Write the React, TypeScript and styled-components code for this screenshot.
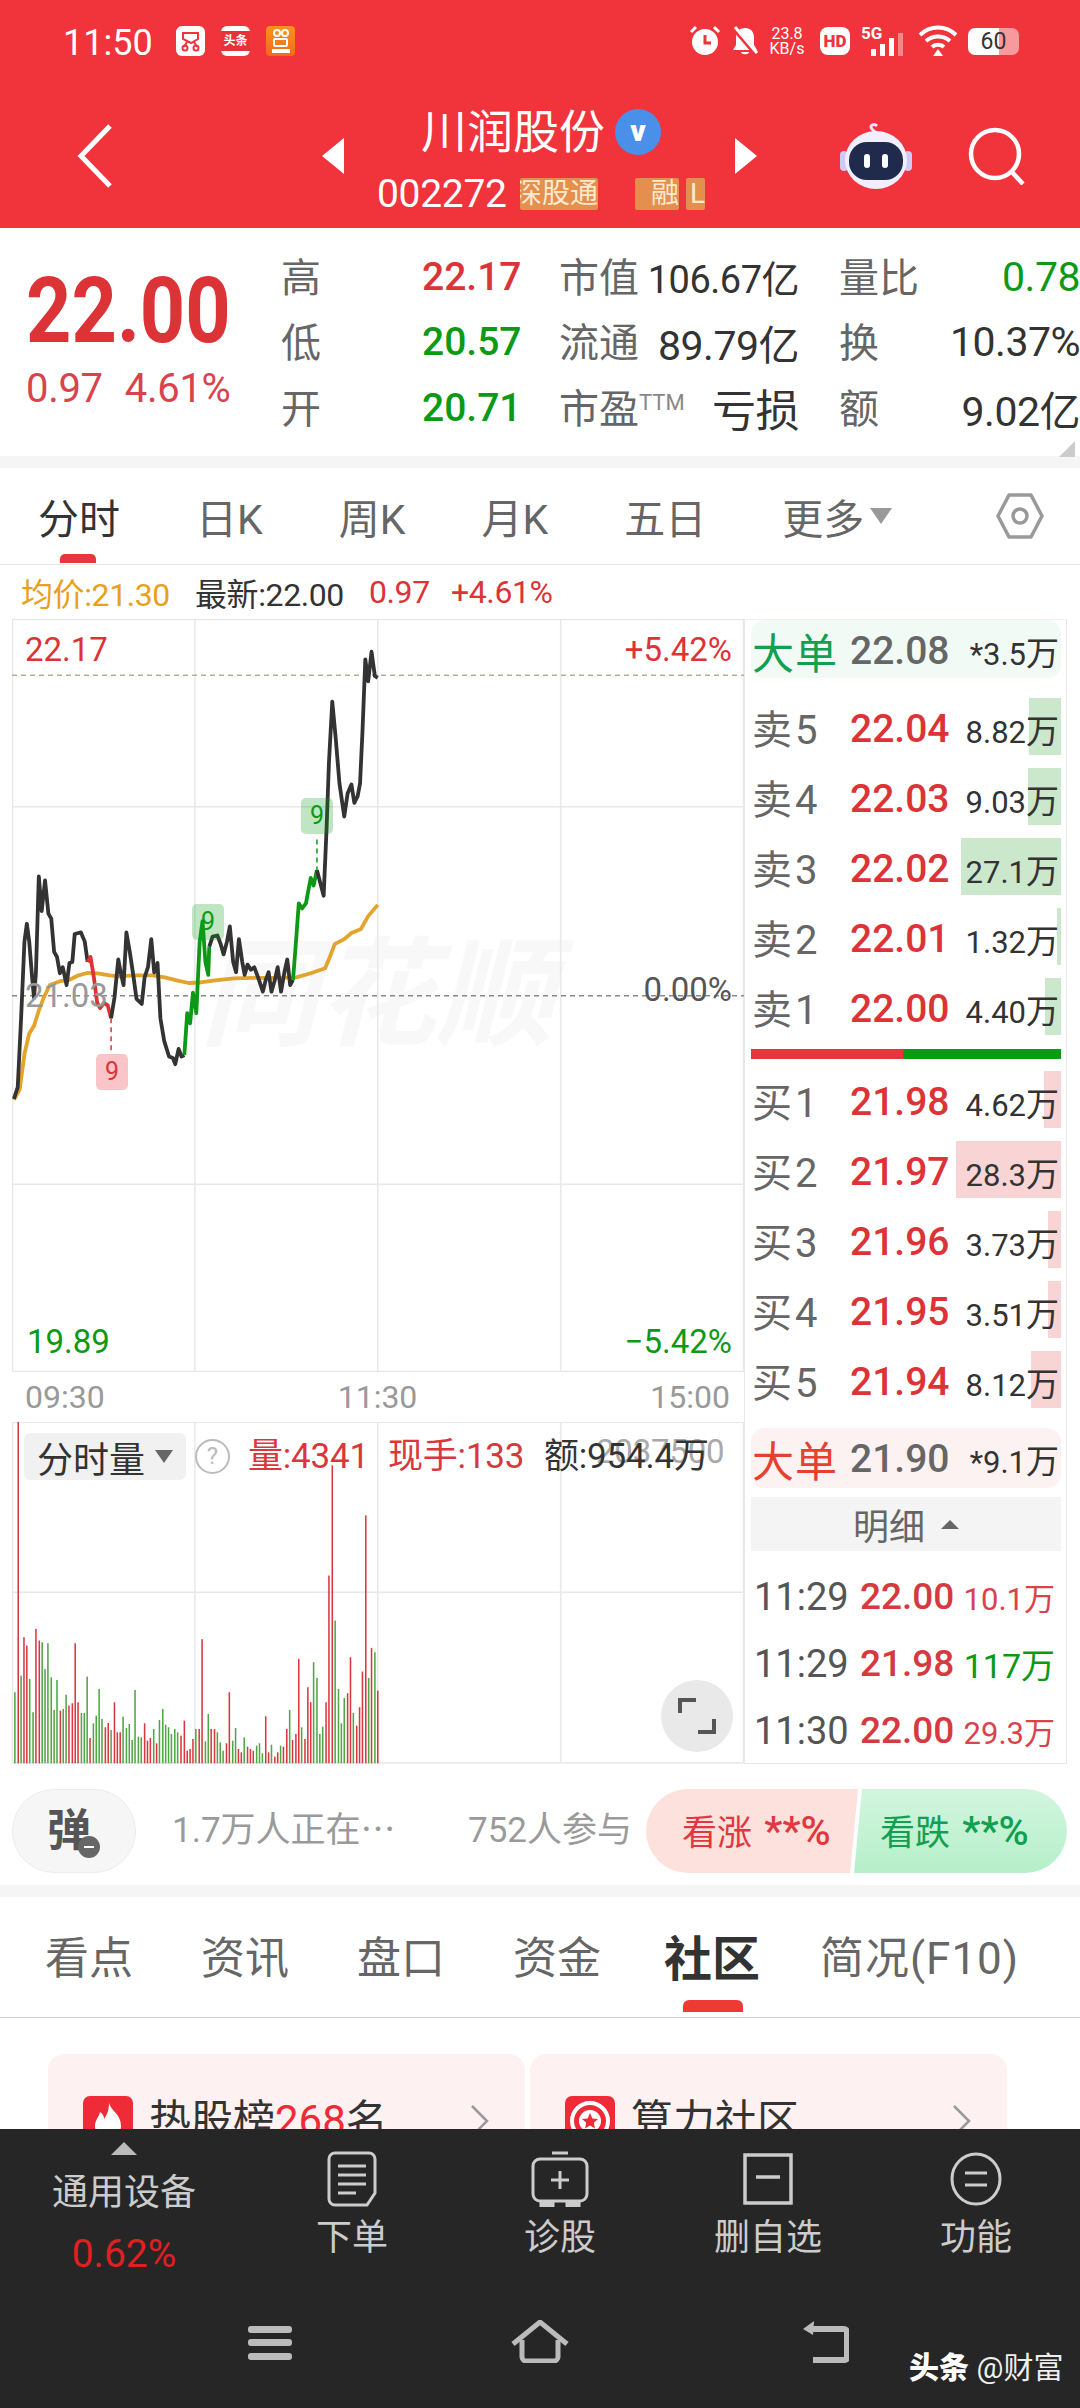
import React from 'react'
import styled, { createGlobalStyle } from 'styled-components'

const RED = '#dc3337'
const GREEN = '#0c9a16'
const HEAD = '#f1333b'

const GlobalStyle = createGlobalStyle`
  html, body {
    margin: 0;
    padding: 0;
    background: #fff;
  }
  * {
    box-sizing: border-box;
  }
  body {
    font-family: Roboto, "Noto Sans CJK SC", sans-serif;
  }
`

const Screen = styled.div`
  width: 1080px;
  height: 2408px;
  display: flex;
  flex-direction: column;
  overflow: hidden;
  background: #fff;
`
const Content = styled.div`
  flex: 1;
  min-height: 0;
  overflow: hidden;
`

/* ---------- header ---------- */
const Header = styled.header`
  height: 228px;
  background: ${HEAD};
  color: #fff;
`
const StatusBar = styled.div`
  height: 84px;
  display: flex;
  align-items: flex-start;
  padding: 26px 0 0 63px;
`
const Clock = styled.span`
  width: 113px;
  font-size: 36px;
  line-height: 34px;
`
const AppIcons = styled.div`
  display: flex;
  gap: 16px;
  width: 513px;
`
const AppTile = styled.div`
  width: 29px;
  height: 30px;
  border-radius: 6px;
  background: #fff;
  display: flex;
  align-items: center;
  justify-content: center;
`
const NewsTile = styled(AppTile)`
  background: linear-gradient(#fff 0 16%, #e8323a 16% 84%, #fff 84%);
  color: #fff;
  font-size: 12px;
  font-weight: 700;
  line-height: 12px;
`
const OrangeTile = styled(AppTile)`
  background: linear-gradient(#f7941d, #f26a1b);
  border-radius: 4px;
`
const StatusRight = styled.div`
  display: flex;
  align-items: center;
  height: 30px;
`
const Speed = styled.div`
  width: 38px;
  margin: 0 14px 0 8px;
  font-size: 16px;
  line-height: 15px;
  text-align: center;
`
const HdBadge = styled.div`
  width: 30px;
  height: 28px;
  border-radius: 8px;
  background: #fff;
  color: ${HEAD};
  font-size: 17px;
  font-weight: 900;
  line-height: 28px;
  text-align: center;
  margin-right: 11px;
`
const Battery = styled.div`
  width: 51px;
  height: 27px;
  margin-left: 10px;
  border-radius: 7px;
  background: linear-gradient(90deg, #fff 0 60%, rgba(255, 255, 255, 0.5) 60%);
  color: #333;
  font-size: 23px;
  line-height: 27px;
  text-align: center;
`
const NavBar = styled.div`
  height: 144px;
  display: flex;
  align-items: center;
  padding-left: 77px;
`
const TitleBlock = styled.div`
  width: 328px;
  margin: 0 30px 0 33px;
`
const TitleLine = styled.div`
  height: 60px;
  display: flex;
  align-items: center;
  justify-content: center;
  gap: 10px;
  margin-bottom: 16px;
`
const StockName = styled.span`
  font-size: 46px;
  line-height: 60px;
  white-space: nowrap;
`
const VBadge = styled.span`
  width: 46px;
  height: 46px;
  border-radius: 50%;
  background: #4a90e8;
  font-size: 30px;
  font-weight: 900;
  line-height: 44px;
  text-align: center;
`
const CodeLine = styled.div`
  height: 32px;
  display: flex;
  align-items: center;
  overflow: hidden;
`
const StockCode = styled.span`
  width: 143px;
  font-size: 39px;
  letter-spacing: -0.3px;
  white-space: nowrap;
`
const Tag = styled.span<{ $w: number; $gap: number }>`
  flex: none;
  width: ${(p) => p.$w}px;
  height: 32px;
  margin-right: ${(p) => p.$gap}px;
  background: #e48f4d;
  border-radius: 2px;
  color: #fce9d0;
  font-size: 28px;
  line-height: 32px;
  overflow: hidden;
  white-space: nowrap;
  display: flex;
  justify-content: flex-end;
`
const RobotBox = styled.div`
  margin: 0 56px 0 83px;
  display: flex;
`

/* ---------- quote ---------- */
const Quote = styled.section`
  height: 228px;
  display: flex;
  padding-top: 16px;
`
const PriceBox = styled.div`
  width: 281px;
  padding: 20px 0 0 26px;
`
const BigPrice = styled.div`
  font-size: 90px;
  line-height: 96px;
  font-weight: 700;
  color: ${RED};
  transform: scaleX(0.88);
  transform-origin: left center;
`
const Change = styled.div`
  display: flex;
  gap: 22px;
  margin-top: 7px;
  font-size: 40px;
  line-height: 44px;
  letter-spacing: -0.3px;
  color: #d9434a;
`
const StatGrid = styled.div`
  display: grid;
  grid-template-columns: 141px 137px 90px 150px 126px 155px;
  grid-auto-rows: 65.5px;
  align-items: center;
  width: 799px;
  position: relative;
`
const StatLabel = styled.span<{ $pad?: boolean }>`
  padding-left: ${(p) => (p.$pad ? 40 : 0)}px;
  margin-bottom: 4px;
  font-size: 40px;
  color: #666;
  white-space: nowrap;
`
const Ttm = styled.sup`
  font-size: 22px;
  color: #888;
  line-height: 0;
  vertical-align: 13px;
`
const StatRise = styled.span<{ $c: string }>`
  font-size: 39px;
  font-weight: 500;
  color: ${(p) => p.$c};
`
const StatValue = styled.span<{ $c?: string; $size?: number }>`
  justify-self: end;
  font-size: ${(p) => p.$size || 41}px;
  letter-spacing: -0.5px;
  color: ${(p) => p.$c || '#333'};
  white-space: nowrap;
`
const Corner = styled.i`
  position: absolute;
  right: 5px;
  bottom: -1px;
  width: 0;
  height: 0;
  border-left: 16px solid transparent;
  border-bottom: 16px solid #ccc;
`
const Band = styled.div`
  height: 12px;
  background: #f5f5f5;
`

/* ---------- chart tabs ---------- */
const ChartTabs = styled.nav`
  height: 97px;
  display: flex;
  align-items: center;
  padding: 0 36px 0 38px;
  gap: 76px;
  border-bottom: 1px solid #e6e6e6;
  position: relative;
`
const ChartTab = styled.span<{ $on?: boolean }>`
  position: relative;
  font-size: 41px;
  color: ${(p) => (p.$on ? '#333' : '#666')};
  display: flex;
  align-items: center;
  gap: 6px;
  white-space: nowrap;
`
const TabMark = styled.i`
  position: absolute;
  left: 22px;
  top: 68px;
  width: 36px;
  height: 9px;
  border-radius: 5px 5px 0 0;
  background: #e8363a;
`
const DownTri = styled.i<{ $s: number; $c: string }>`
  width: 0;
  height: 0;
  border-left: ${(p) => p.$s}px solid transparent;
  border-right: ${(p) => p.$s}px solid transparent;
  border-top: ${(p) => p.$s * 1.5}px solid ${(p) => p.$c};
`
const GearBox = styled.span`
  margin-left: auto;
  display: flex;
`
const Legend = styled.div`
  height: 54px;
  display: flex;
  align-items: center;
  padding-left: 21px;
  font-size: 32px;
  letter-spacing: -0.4px;
  white-space: nowrap;
`
const LegendItem = styled.span<{ $c: string; $w: number }>`
  width: ${(p) => p.$w}px;
  color: ${(p) => p.$c};
`

/* ---------- chart ---------- */
const ChartRow = styled.section`
  height: 1145px;
  display: flex;
  padding-left: 12px;
`
const ChartCol = styled.div`
  width: 732px;
`
const Plot = styled.div<{ $h: number }>`
  position: relative;
  height: ${(p) => p.$h}px;
  overflow: hidden;
  svg {
    display: block;
    position: relative;
  }
`
const Watermark = styled.span`
  position: absolute;
  left: 188px;
  top: 322px;
  font-size: 118px;
  font-weight: 700;
  font-style: italic;
  line-height: 110px;
  color: #f8f8f8;
  white-space: nowrap;
`
const ChartLabel = styled.span<{ $c: string; $top: number; $left?: number; $right?: number }>`
  position: absolute;
  top: ${(p) => p.$top}px;
  ${(p) => (p.$left !== undefined ? `left: ${p.$left}px;` : `right: ${p.$right}px;`)}
  font-size: 33px;
  line-height: 36px;
  color: ${(p) => p.$c};
  white-space: nowrap;
`
const Pin = styled.span<{ $red?: boolean; $x: number; $y: number }>`
  position: absolute;
  left: ${(p) => p.$x}px;
  top: ${(p) => p.$y}px;
  width: 32px;
  height: 36px;
  border-radius: 5px;
  background: ${(p) => (p.$red ? 'rgba(240, 90, 100, 0.35)' : 'rgba(12, 154, 22, 0.26)')};
  color: ${(p) => (p.$red ? RED : GREEN)};
  font-size: 25px;
  line-height: 36px;
  text-align: center;
`
const TimeAxis = styled.div`
  height: 50px;
  display: flex;
  align-items: center;
  justify-content: space-between;
  padding: 0 14px 0 13px;
  font-size: 32px;
  color: #999;
`
const VolChip = styled.div`
  position: absolute;
  left: 12px;
  top: 11px;
  width: 162px;
  height: 47px;
  border-radius: 6px;
  background: #f1f1f1;
  color: #333;
  font-size: 36px;
  display: flex;
  align-items: center;
  justify-content: center;
  gap: 10px;
`
const HelpDot = styled.span`
  position: absolute;
  left: 183px;
  top: 17px;
  width: 35px;
  height: 35px;
  border: 2px solid #bbb;
  border-radius: 50%;
  color: #bbb;
  font-size: 24px;
  line-height: 31px;
  text-align: center;
`
const VolText = styled.span<{ $c: string; $x: number; $size?: number; $y?: number }>`
  position: absolute;
  left: ${(p) => p.$x}px;
  top: ${(p) => p.$y ?? 13}px;
  font-size: ${(p) => p.$size || 35}px;
  line-height: 44px;
  letter-spacing: -0.2px;
  color: ${(p) => p.$c};
  white-space: nowrap;
`
const ExpandBtn = styled.div`
  position: absolute;
  left: 649px;
  top: 258px;
  width: 72px;
  height: 72px;
  border-radius: 50%;
  background: #e9e9e9;
  display: flex;
  align-items: center;
  justify-content: center;
`

/* ---------- order book ---------- */
const Book = styled.aside`
  width: 323px;
  padding: 0 5px 0 6px;
  border: 1px solid #e8e8e8;
  border-top: 1px solid #f0f0f0;
  height: 1145px;
`
const BigOrder = styled.div<{ $sell?: boolean; $h: number }>`
  height: ${(p) => p.$h}px;
  border-radius: 14px;
  background: ${(p) => (p.$sell ? '#f2faf5' : '#fdf2f2')};
  display: grid;
  grid-template-columns: 98px 1fr auto;
  align-items: center;
  padding: 0 2px 5px 1px;
`
const BigLabel = styled.span<{ $sell?: boolean }>`
  font-size: 42px;
  letter-spacing: 1px;
  color: ${(p) => (p.$sell ? '#10a050' : '#e8402f')};
  white-space: nowrap;
`
const GrayPrice = styled.span`
  font-size: 39px;
  font-weight: 500;
  color: #666;
`
const Levels = styled.div<{ $top: number }>`
  display: flex;
  flex-direction: column;
  gap: 13px;
  margin-top: ${(p) => p.$top}px;
`
const Level = styled.div`
  position: relative;
  height: 57px;
  display: grid;
  grid-template-columns: 98px 1fr auto;
  align-items: center;
  padding: 0 2px 4px 1px;
`
const DepthBar = styled.i<{ $sell?: boolean }>`
  position: absolute;
  right: 0;
  top: 0;
  bottom: 0;
  background: ${(p) => (p.$sell ? '#cbe8cc' : '#f8d4d5')};
`
const LevelName = styled.span`
  position: relative;
  font-size: 40px;
  letter-spacing: 3px;
  margin-bottom: 3px;
  color: #666;
  white-space: nowrap;
`
const LevelPrice = styled.span`
  position: relative;
  font-size: 39px;
  font-weight: 500;
  color: ${RED};
`
const LevelVol = styled.span`
  position: relative;
  font-size: 31px;
  color: #333;
  white-space: nowrap;
`
const Wan = styled.span`
  font-size: 33px;
`
const Balance = styled.div`
  display: flex;
  height: 10px;
  margin-top: 14px;
  background: ${GREEN};
`
const BalanceRed = styled.i`
  display: block;
  height: 100%;
  background: #e8343a;
`
const DetailBar = styled.div`
  height: 54px;
  margin-top: 9px;
  background: #f4f4f4;
  display: flex;
  align-items: center;
  justify-content: center;
  gap: 16px;
  color: #666;
  font-size: 36px;
`
const UpTri = styled.i<{ $s: number; $c: string }>`
  width: 0;
  height: 0;
  border-left: ${(p) => p.$s}px solid transparent;
  border-right: ${(p) => p.$s}px solid transparent;
  border-bottom: ${(p) => p.$s}px solid ${(p) => p.$c};
`
const Trades = styled.div`
  margin-top: 12px;
`
const Trade = styled.div`
  height: 67px;
  display: grid;
  grid-template-columns: 106px 1fr auto;
  align-items: center;
  padding: 0 6px 0 3px;
`
const TradeTime = styled.span`
  font-size: 38px;
  color: #555;
`
const TradePrice = styled.span`
  font-size: 37px;
  font-weight: 500;
  color: #d63a3f;
`
const TradeVol = styled.span<{ $c: string; $size?: number }>`
  font-size: ${(p) => p.$size || 31}px;
  color: ${(p) => p.$c};
  white-space: nowrap;
`

/* ---------- poll ---------- */
const PollRow = styled.section`
  height: 121px;
  padding: 25px 0 0 12px;
  display: flex;
  align-items: flex-start;
`
const DanmuPill = styled.div`
  position: relative;
  width: 124px;
  height: 84px;
  border-radius: 42px;
  border: 1px solid #ececec;
  background: #f6f6f6;
  color: #555;
  font-size: 44px;
  font-weight: 700;
  line-height: 82px;
  text-align: center;
  padding-right: 10px;
  margin-right: 36px;
`
const PillMinus = styled.i`
  position: absolute;
  left: 65px;
  top: 46px;
  width: 22px;
  height: 22px;
  border-radius: 50%;
  background: #666;
  &::after {
    content: '';
    position: absolute;
    left: 6px;
    right: 6px;
    top: 10px;
    height: 2px;
    background: #fff;
  }
`
const PollText = styled.span<{ $w: number }>`
  width: ${(p) => p.$w}px;
  font-size: 35px;
  line-height: 84px;
  color: #9a9a9a;
  white-space: nowrap;
`
const PollUp = styled.div`
  width: 212px;
  height: 84px;
  padding-left: 36px;
  border-radius: 42px 0 0 42px;
  background: #fde1dd;
  color: #e0383e;
  font-size: 35px;
  line-height: 84px;
  clip-path: polygon(0 0, 100% 0, calc(100% - 8px) 100%, 0 100%);
  white-space: nowrap;
`
const PollDown = styled.div`
  width: 213px;
  height: 84px;
  margin-left: -4px;
  padding-left: 26px;
  border-radius: 0 42px 42px 0;
  background: linear-gradient(#d2f6df, #b6efc9);
  color: #10a050;
  font-size: 35px;
  line-height: 84px;
  clip-path: polygon(8px 0, 100% 0, 100% 100%, 0 100%);
  white-space: nowrap;
`
const PollPct = styled.span`
  margin-left: 2px;
  font-size: 41px;
  font-weight: 500;
`

/* ---------- info tabs ---------- */
const InfoTabs = styled.nav`
  height: 121px;
  display: flex;
  align-items: center;
  padding: 0 0 4px 45px;
  gap: 68px;
  border-bottom: 1px solid #ccc;
`
const InfoTab = styled.span<{ $on?: boolean }>`
  position: relative;
  font-size: ${(p) => (p.$on ? 48 : 44)}px;
  font-weight: ${(p) => (p.$on ? 700 : 400)};
  color: ${(p) => (p.$on ? '#333' : '#666')};
  margin: ${(p) => (p.$on ? '0 -8px 0 -5px' : 0)};
  white-space: nowrap;
`
const WideTab = styled(InfoTab)`
  letter-spacing: 1px;
`
const InfoMark = styled.i`
  position: absolute;
  left: 19px;
  top: 80px;
  width: 60px;
  height: 12px;
  border-radius: 6px 6px 0 0;
  background: #ef3a33;
`
const Cards = styled.div`
  display: flex;
  gap: 5px;
  padding: 36px 0 0 48px;
`
const Card = styled.div`
  width: 477px;
  height: 200px;
  padding: 42px 0 0 35px;
  border-radius: 16px 16px 0 0;
  background: #fdf1f1;
  display: flex;
  align-items: flex-start;
`
const CardIcon = styled.div`
  width: 50px;
  height: 50px;
  border-radius: 7px;
  background: #ee2b36;
  display: flex;
  align-items: center;
  justify-content: center;
  margin-right: 16px;
`
const CardText = styled.span`
  flex: 1;
  font-size: 42px;
  line-height: 50px;
  color: #333;
  white-space: nowrap;
`
const CardHot = styled.span`
  color: #ee2b36;
`
const CardArrow = styled.span`
  margin: 8px 35px 0 0;
  display: flex;
`

/* ---------- bottom bar ---------- */
const BottomBar = styled.footer`
  position: relative;
  height: 279px;
  flex: none;
  background: #262626;
`
const Actions = styled.div`
  height: 191px;
  display: grid;
  grid-template-columns: 248px repeat(4, 208px);
`
const Holding = styled.div`
  display: flex;
  flex-direction: column;
  align-items: center;
  padding-top: 13px;
`
const HoldingName = styled.span`
  margin-top: 13px;
  font-size: 36px;
  line-height: 50px;
  color: #ccc;
`
const HoldingPct = styled.span`
  margin-top: 11px;
  font-size: 39px;
  line-height: 50px;
  color: #e02020;
`
const Action = styled.div`
  display: flex;
  flex-direction: column;
  align-items: center;
  padding-top: 22px;
`
const ActionLabel = styled.span`
  margin-top: 6px;
  font-size: 36px;
  line-height: 50px;
  color: #ccc;
`
const SystemKeys = styled.div`
  display: grid;
  grid-template-columns: 263px 290px 48px;
  padding-left: 248px;
`
const Credit = styled.span`
  position: absolute;
  left: 909px;
  top: 220px;
  font-size: 30px;
  line-height: 38px;
  color: #eee;
  white-space: nowrap;
`
const CreditBold = styled.b`
  color: #fff;
  font-weight: 900;
`

/* ---------- data ---------- */
const black1 =
  '30,958 38,935 45,800 52,650 57,615 62,650 68,720 72,760 76,710 82,522 88,590 95,530 102,595 108,605 114,670 120,680 126,712 132,700 140,735 146,692 152,690 157,635 170,632 178,650 184,690'
const red1 = '184,690 190,680 197,720 204,770 210,780 218,770 226,775 233,800'
const black2 =
  '233,800 240,760 248,685 253,710 259,735 265,632 272,670 280,720 286,762 297,772 303,720 310,700 317,645 323,710 330,692 336,800 344,845 354,875 362,878 367,890 374,860 380,875 386,872'
const green1 = '386,872 392,790 398,810 404,750 411,790 418,650 424,610 430,690 436,715 438,660'
const black3 =
  '438,660 445,640 455,638 462,655 468,675 475,650 481,620 488,690 494,710 500,645 507,690 512,715 518,695 525,705 532,700 540,720 550,748 556,725 562,710 568,748 575,725 581,700 588,748 595,710 601,685 607,735 613,725'
const green2 = '613,725 620,640 625,575 632,585 640,575 650,525 656,540 663,510'
const black4 =
  '663,510 670,535 677,560 683,430 688,300 695,180 702,250 710,340 720,405 727,360 735,342 741,378 748,365 753,340 758,240 764,97 770,140 777,82 784,130 790,133'
const avgLine =
  '30,960 42,940 52,870 62,830 72,815 82,785 92,760 105,735 125,728 145,725 165,716 185,711 205,712 230,716 250,718 280,716 320,716 345,720 370,726 395,731 420,730 450,726 490,722 530,721 580,721 620,720 650,712 680,702 690,680 700,655 720,645 735,633 755,625 770,600 790,578'

// [x, top, colour] in the crop units of the volume plot
const volumes: [number, number, 'r' | 'g'][] = [
  [32, 875, 'g'], [39, 62, 'r'], [45, 825, 'g'], [51, 710, 'r'], [57, 735, 'r'], [63, 835, 'g'], [70, 935, 'g'], [76, 685, 'r'],
  [83, 720, 'r'], [89, 725, 'g'], [95, 805, 'g'], [101, 728, 'g'], [108, 830, 'g'], [114, 928, 'g'], [120, 838, 'g'], [127, 930, 'r'],
  [133, 925, 'g'], [139, 882, 'g'], [145, 915, 'r'], [152, 908, 'r'], [158, 728, 'r'], [164, 905, 'r'], [171, 937, 'g'], [177, 937, 'g'],
  [183, 828, 'g'], [189, 1012, 'r'], [196, 968, 'g'], [202, 945, 'g'], [208, 865, 'g'], [214, 955, 'g'], [221, 980, 'r'], [227, 967, 'r'],
  [233, 988, 'g'], [240, 905, 'r'], [246, 995, 'r'], [252, 995, 'r'], [258, 948, 'g'], [265, 982, 'g'], [271, 970, 'g'], [277, 1018, 'g'],
  [283, 868, 'g'], [290, 1008, 'g'], [296, 1010, 'g'], [303, 968, 'r'], [309, 1020, 'r'], [315, 1012, 'r'], [322, 985, 'g'], [328, 1028, 'r'],
  [334, 958, 'g'], [341, 925, 'g'], [347, 972, 'g'], [353, 980, 'g'], [359, 1000, 'g'], [366, 985, 'g'], [372, 995, 'g'], [379, 1005, 'r'],
  [386, 960, 'r'], [392, 1050, 'r'], [398, 1045, 'r'], [404, 1015, 'r'], [410, 985, 'g'], [417, 985, 'r'], [423, 716, 'r'], [430, 1022, 'g'],
  [436, 940, 'g'], [442, 985, 'r'], [449, 985, 'r'], [455, 995, 'g'], [461, 1025, 'g'], [467, 1050, 'g'], [474, 1028, 'r'], [480, 875, 'r'],
  [487, 1020, 'g'], [493, 982, 'g'], [499, 1045, 'r'], [505, 1055, 'r'], [511, 1010, 'g'], [518, 1038, 'r'], [524, 1045, 'r'], [530, 1050, 'r'],
  [537, 1035, 'g'], [543, 1028, 'g'], [549, 1058, 'g'], [556, 947, 'r'], [562, 1055, 'r'], [568, 1032, 'g'], [575, 1068, 'r'], [581, 1055, 'r'],
  [587, 1035, 'g'], [593, 1038, 'r'], [600, 985, 'r'], [606, 928, 'g'], [612, 1018, 'r'], [619, 1000, 'r'], [625, 775, 'r'], [631, 980, 'g'],
  [638, 1015, 'r'], [644, 860, 'r'], [650, 905, 'r'], [656, 785, 'g'], [663, 832, 'g'], [669, 1000, 'g'], [675, 978, 'g'], [682, 905, 'r'],
  [688, 525, 'r'], [695, 195, 'r'], [701, 660, 'g'], [708, 865, 'g'], [714, 968, 'g'], [720, 892, 'g'], [727, 878, 'r'], [733, 770, 'r'],
  [739, 937, 'g'], [746, 975, 'r'], [752, 920, 'r'], [758, 813, 'r'], [765, 345, 'r'], [771, 832, 'g'], [777, 742, 'r'], [784, 755, 'g'], [790, 870, 'r'],
]

const sells = [
  { name: '卖5', price: '22.04', vol: '8.82', bar: 32 },
  { name: '卖4', price: '22.03', vol: '9.03', bar: 33 },
  { name: '卖3', price: '22.02', vol: '27.1', bar: 100 },
  { name: '卖2', price: '22.01', vol: '1.32', bar: 4 },
  { name: '卖1', price: '22.00', vol: '4.40', bar: 16 },
]
const buys = [
  { name: '买1', price: '21.98', vol: '4.62', bar: 17 },
  { name: '买2', price: '21.97', vol: '28.3', bar: 105 },
  { name: '买3', price: '21.96', vol: '3.73', bar: 13 },
  { name: '买4', price: '21.95', vol: '3.51', bar: 13 },
  { name: '买5', price: '21.94', vol: '8.12', bar: 30 },
]

const Line: React.FC<{ points: string; color: string; width?: number }> = ({ points, color, width = 3.8 }) => (
  <polyline points={points} fill="none" stroke={color} strokeWidth={width} strokeLinejoin="round" vectorEffect="non-scaling-stroke" />
)

const GridLine: React.FC<{ d: string; color?: string; dash?: boolean }> = ({ d, color = '#e8e8e8', dash }) => (
  <path d={d} fill="none" stroke={color} strokeWidth={1.5} strokeDasharray={dash ? '5 4' : undefined} vectorEffect="non-scaling-stroke" />
)

const Robot = () => (
  <svg width="72" height="66" viewBox="0 0 72 66">
    <path d="M36 10c-2-3-5-3-5-6s4-3 6-1" fill="none" stroke="#e8e4ff" strokeWidth="3" />
    <rect x="0" y="28" width="8" height="20" rx="4" fill="#cfc9f5" />
    <rect x="64" y="28" width="8" height="20" rx="4" fill="#cfc9f5" />
    <ellipse cx="36" cy="37" rx="31" ry="29" fill="#f1eeff" />
    <rect x="9" y="19" width="54" height="38" rx="18" fill="#1f2a4d" />
    <rect x="24" y="31" width="6" height="14" rx="3" fill="#fff" />
    <rect x="42" y="31" width="6" height="14" rx="3" fill="#fff" />
  </svg>
)

const App: React.FC = () => {
  return (
    <Screen>
      <GlobalStyle />
      <Content>
        <Header>
          <StatusBar>
            <Clock>11:50</Clock>
            <AppIcons>
              <AppTile>
                <svg width="21" height="22" viewBox="0 0 21 22" fill="none" stroke={HEAD} strokeWidth="2">
                  <path d="M3 3h15v6l-7 4-8-4zM7 12l-3 5M14 12l3 5" />
                  <circle cx="5" cy="18" r="2.5" />
                  <circle cx="16" cy="18" r="2.5" />
                </svg>
              </AppTile>
              <NewsTile>头条</NewsTile>
              <OrangeTile>
                <svg width="20" height="26" viewBox="0 0 20 26" fill="none" stroke="#fff" strokeWidth="2">
                  <circle cx="6" cy="5" r="3" />
                  <circle cx="14" cy="5" r="3" />
                  <rect x="3" y="11" width="13" height="7" rx="1" />
                  <path d="M1 23h18" strokeWidth="4" />
                </svg>
              </OrangeTile>
            </AppIcons>
            <StatusRight>
              <svg width="32" height="32" viewBox="0 0 32 32">
                <circle cx="16" cy="17" r="13" fill="#fff" />
                <path d="M16 10v8h6" fill="none" stroke={HEAD} strokeWidth="3" />
                <path d="M2 7l5-5M30 7l-5-5" stroke="#fff" strokeWidth="3" />
              </svg>
              <svg width="30" height="32" viewBox="0 0 30 32" style={{ marginLeft: 9 }}>
                <path d="M15 3c6 0 9 4 9 10v7l3 5H3l3-5v-7c0-6 3-10 9-10zM11 27h8c0 3-8 3-8 0z" fill="#fff" />
                <path d="M3 2l24 28" stroke={HEAD} strokeWidth="5" />
                <path d="M5 2l22 26" stroke="#fff" strokeWidth="3" />
              </svg>
              <Speed>
                23.8
                <br />
                KB/s
              </Speed>
              <HdBadge>HD</HdBadge>
              <svg width="46" height="32" viewBox="0 0 46 32" fill="#fff">
                <text x="0" y="14" fontSize="17" fontWeight="700" fontFamily="Roboto">5G</text>
                <rect x="10" y="24" width="5" height="7" />
                <rect x="19" y="19" width="5" height="12" />
                <rect x="28" y="13" width="5" height="18" />
                <rect x="37" y="8" width="5" height="23" opacity="0.4" />
              </svg>
              <svg width="40" height="32" viewBox="0 0 40 32" fill="none" stroke="#fff" strokeWidth="4" style={{ marginLeft: 11 }}>
                <path d="M2 10c10-10 26-10 36 0M8 16c7-6 17-6 24 0M14 22c3-3 9-3 12 0" />
                <path d="M20 24l5 7H15z" fill="#fff" stroke="none" />
              </svg>
              <Battery>60</Battery>
            </StatusRight>
          </StatusBar>
          <NavBar>
            <svg width="35" height="64" viewBox="0 0 35 64" fill="none" stroke="#fff" strokeWidth="5">
              <path d="M33 2L4 32l29 30" />
            </svg>
            <svg width="22" height="36" viewBox="0 0 22 36" fill="#fff" style={{ marginLeft: 210 }}>
              <path d="M22 0v36L0 18z" />
            </svg>
            <TitleBlock>
              <TitleLine>
                <StockName>川润股份</StockName>
                <VBadge>v</VBadge>
              </TitleLine>
              <CodeLine>
                <StockCode>002272</StockCode>
                <Tag $w={78} $gap={37}>深股通</Tag>
                <Tag $w={44} $gap={7}>融</Tag>
                <Tag $w={19} $gap={0}>L</Tag>
              </CodeLine>
            </TitleBlock>
            <svg width="22" height="36" viewBox="0 0 22 36" fill="#fff">
              <path d="M0 0v36l22-18z" />
            </svg>
            <RobotBox>
              <Robot />
            </RobotBox>
            <svg width="58" height="58" viewBox="0 0 58 58" fill="none" stroke="#fff" strokeWidth="4.5">
              <circle cx="27" cy="27" r="24" />
              <path d="M43 44l12 13" />
            </svg>
          </NavBar>
        </Header>

        <Quote>
          <PriceBox>
            <BigPrice>22.00</BigPrice>
            <Change>
              <span>0.97</span>
              <span>4.61%</span>
            </Change>
          </PriceBox>
          <StatGrid>
            <StatLabel>高</StatLabel>
            <StatRise $c={RED}>22.17</StatRise>
            <StatLabel>市值</StatLabel>
            <StatValue $size={38}>106.67亿</StatValue>
            <StatLabel $pad>量比</StatLabel>
            <StatValue $c={GREEN}>0.78</StatValue>
            <StatLabel>低</StatLabel>
            <StatRise $c={GREEN}>20.57</StatRise>
            <StatLabel>流通</StatLabel>
            <StatValue>89.79亿</StatValue>
            <StatLabel $pad>换</StatLabel>
            <StatValue>10.37%</StatValue>
            <StatLabel>开</StatLabel>
            <StatRise $c={GREEN}>20.71</StatRise>
            <StatLabel>
              市盈<Ttm>TTM</Ttm>
            </StatLabel>
            <StatValue $size={44}>亏损</StatValue>
            <StatLabel $pad>额</StatLabel>
            <StatValue>9.02亿</StatValue>
            <Corner />
          </StatGrid>
        </Quote>
        <Band />

        <ChartTabs>
          <ChartTab $on>
            分时
            <TabMark />
          </ChartTab>
          <ChartTab>日K</ChartTab>
          <ChartTab>周K</ChartTab>
          <ChartTab>月K</ChartTab>
          <ChartTab>五日</ChartTab>
          <ChartTab>
            更多
            <DownTri $s={11} $c="#999" />
          </ChartTab>
          <GearBox>
            <svg width="48" height="46" viewBox="0 0 48 46" fill="none" stroke="#999" strokeWidth="3.5">
              <path d="M13 2h22l11 21-11 21H13L2 23z" strokeLinejoin="round" />
              <circle cx="24" cy="23" r="7" />
            </svg>
          </GearBox>
        </ChartTabs>
        <Legend>
          <LegendItem $c="#e8a021" $w={174}>均价:21.30</LegendItem>
          <LegendItem $c="#333" $w={174}>最新:22.00</LegendItem>
          <LegendItem $c={RED} $w={82}>0.97</LegendItem>
          <LegendItem $c={RED} $w={110}>+4.61%</LegendItem>
        </Legend>

        <ChartRow>
          <ChartCol>
            <Plot $h={753}>
              <Watermark>同花顺</Watermark>
              <svg width="732" height="753" viewBox="26 18 1529 1475" preserveAspectRatio="none">
                <GridLine d="M27 19H1554V1492H27Z" />
                <GridLine d="M408 18V1493M790 18V1493M1172 18V1493M26 386H1555M26 1125H1555" />
                <GridLine d="M26 128H1555" color="#b8b08a" dash />
                <GridLine d="M26 756H1555" color="#888" dash />
                <GridLine d="M233 800V870" color={RED} dash />
                <GridLine d="M663 450V510" color={GREEN} dash />
                <Line points={avgLine} color="#e3a32c" />
                <Line points={black1} color="#333" />
                <Line points={red1} color="#dc3337" />
                <Line points={black2} color="#333" />
                <Line points={green1} color="#0c9a16" />
                <Line points={black3} color="#333" />
                <Line points={green2} color="#0c9a16" />
                <Line points={black4} color="#333" />
              </svg>
              <ChartLabel $c={RED} $top={13} $left={13}>22.17</ChartLabel>
              <ChartLabel $c={RED} $top={13} $right={12}>+5.42%</ChartLabel>
              <ChartLabel $c="#999" $top={359} $left={13}>21.03</ChartLabel>
              <ChartLabel $c="#555" $top={353} $right={12}>0.00%</ChartLabel>
              <ChartLabel $c={GREEN} $top={705} $left={15}>19.89</ChartLabel>
              <ChartLabel $c={GREEN} $top={705} $right={12}>−5.42%</ChartLabel>
              <Pin $red $x={84} $y={435}>9</Pin>
              <Pin $x={180} $y={285}>9</Pin>
              <Pin $x={289} $y={179}>9</Pin>
            </Plot>
            <TimeAxis>
              <span>09:30</span>
              <span>11:30</span>
              <span>15:00</span>
            </TimeAxis>
            <Plot $h={342}>
              <svg width="732" height="342" viewBox="26 65 1529 1025" preserveAspectRatio="none">
                <GridLine d="M27 66H1554V1086H27Z" />
                <GridLine d="M408 65V1086M790 65V1086M1172 65V1086M26 575H1555" />
                {volumes.map(([x, top, c]) => (
                  <rect key={x} x={x - 1.6} y={top} width={3.2} height={1088 - top} fill={c === 'r' ? '#d9363e' : '#4fa644'} />
                ))}
              </svg>
              <VolChip>
                分时量
                <DownTri $s={9} $c="#666" />
              </VolChip>
              <HelpDot>?</HelpDot>
              <VolText $c="#d9363e" $x={236}>量:4341</VolText>
              <VolText $c="#d9363e" $x={376}>现手:133</VolText>
              <VolText $c="#aaa" $x={584} $size={33} $y={8}>2037500</VolText>
              <VolText $c="#333" $x={532}>额:954.4万</VolText>
              <ExpandBtn>
                <svg width="38" height="38" viewBox="0 0 38 38" fill="none" stroke="#555" strokeWidth="4">
                  <path d="M2 16V3h16M36 22v13H20" />
                </svg>
              </ExpandBtn>
            </Plot>
          </ChartCol>

          <Book>
            <BigOrder $sell $h={58}>
              <BigLabel $sell>大单</BigLabel>
              <GrayPrice>22.08</GrayPrice>
              <LevelVol>*3.5<Wan>万</Wan></LevelVol>
            </BigOrder>
            <Levels $top={20}>
              {sells.map((s) => (
                <Level key={s.name}>
                  <DepthBar $sell style={{ width: s.bar }} />
                  <LevelName>{s.name}</LevelName>
                  <LevelPrice>{s.price}</LevelPrice>
                  <LevelVol>{s.vol}<Wan>万</Wan></LevelVol>
                </Level>
              ))}
            </Levels>
            <Balance>
              <BalanceRed style={{ width: 152 }} />
            </Balance>
            <Levels $top={12}>
              {buys.map((s) => (
                <Level key={s.name}>
                  <DepthBar style={{ width: s.bar }} />
                  <LevelName>{s.name}</LevelName>
                  <LevelPrice>{s.price}</LevelPrice>
                  <LevelVol>{s.vol}<Wan>万</Wan></LevelVol>
                </Level>
              ))}
            </Levels>
            <Levels $top={20}>
              <BigOrder $h={60}>
                <BigLabel>大单</BigLabel>
                <GrayPrice>21.90</GrayPrice>
                <LevelVol>*9.1<Wan>万</Wan></LevelVol>
              </BigOrder>
            </Levels>
            <DetailBar>
              明细
              <UpTri $s={9} $c="#666" />
            </DetailBar>
            <Trades>
              <Trade>
                <TradeTime>11:29</TradeTime>
                <TradePrice>22.00</TradePrice>
                <TradeVol $c="#d9434a">10.1万</TradeVol>
              </Trade>
              <Trade>
                <TradeTime>11:29</TradeTime>
                <TradePrice>21.98</TradePrice>
                <TradeVol $c={GREEN} $size={34}>117万</TradeVol>
              </Trade>
              <Trade>
                <TradeTime>11:30</TradeTime>
                <TradePrice>22.00</TradePrice>
                <TradeVol $c="#d9434a">29.3万</TradeVol>
              </Trade>
            </Trades>
          </Book>
        </ChartRow>

        <PollRow>
          <DanmuPill>
            弹
            <PillMinus />
          </DanmuPill>
          <PollText $w={296}>1.7万人正在⋯</PollText>
          <PollText $w={178}>752人参与</PollText>
          <PollUp>看涨<PollPct> **%</PollPct></PollUp>
          <PollDown>看跌<PollPct> **%</PollPct></PollDown>
        </PollRow>
        <Band />

        <InfoTabs>
          <InfoTab>看点</InfoTab>
          <InfoTab>资讯</InfoTab>
          <InfoTab>盘口</InfoTab>
          <InfoTab>资金</InfoTab>
          <InfoTab $on>
            社区
            <InfoMark />
          </InfoTab>
          <WideTab>简况(F10)</WideTab>
        </InfoTabs>
        <Cards>
          <Card>
            <CardIcon>
              <svg width="30" height="36" viewBox="0 0 30 36" fill="#fff">
                <path d="M16 0c2 8 12 11 12 23 0 8-6 13-13 13S2 31 2 23c0-6 4-9 5-14 3 2 4 4 4 7 3-4 5-9 5-16z" />
              </svg>
            </CardIcon>
            <CardText>
              热股榜<CardHot>268</CardHot>名
            </CardText>
            <CardArrow>
              <svg width="20" height="34" viewBox="0 0 20 34" fill="none" stroke="#999" strokeWidth="2.5">
                <path d="M2 2l15 15L2 32" />
              </svg>
            </CardArrow>
          </Card>
          <Card>
            <CardIcon>
              <svg width="40" height="40" viewBox="0 0 40 40">
                <circle cx="20" cy="20" r="18" fill="none" stroke="#fff" strokeWidth="4" />
                <circle cx="20" cy="20" r="11" fill="#fff" />
                <path d="M20 12l2.4 5.4 5.6.6-4.2 3.8 1.2 5.7-5-3-5 3 1.2-5.7L12 18l5.6-.6z" fill="#ee2b36" />
              </svg>
            </CardIcon>
            <CardText>算力社区</CardText>
            <CardArrow>
              <svg width="20" height="34" viewBox="0 0 20 34" fill="none" stroke="#999" strokeWidth="2.5">
                <path d="M2 2l15 15L2 32" />
              </svg>
            </CardArrow>
          </Card>
        </Cards>
      </Content>

      <BottomBar>
        <Actions>
          <Holding>
            <UpTri $s={13} $c="#bbb" />
            <HoldingName>通用设备</HoldingName>
            <HoldingPct>0.62%</HoldingPct>
          </Holding>
          <Action>
            <svg width="50" height="56" viewBox="0 0 50 56" fill="none" stroke="#ccc" strokeWidth="3">
              <path d="M8 2h34a6 6 0 0 1 6 6v34l-8 12H8a6 6 0 0 1-6-6V8a6 6 0 0 1 6-6z" />
              <path d="M11 15h28M11 24h28M11 33h28M11 42h18" />
            </svg>
            <ActionLabel>下单</ActionLabel>
          </Action>
          <Action>
            <svg width="58" height="56" viewBox="0 0 58 56" fill="none" stroke="#ccc" strokeWidth="3">
              <path d="M21 2h16" />
              <rect x="2" y="8" width="54" height="42" rx="7" />
              <path d="M29 20v18M20 29h18" />
              <path d="M10 50v5h12v-5M36 50v5h12v-5" fill="#ccc" />
            </svg>
            <ActionLabel>诊股</ActionLabel>
          </Action>
          <Action>
            <svg width="50" height="56" viewBox="0 0 50 56" fill="none" stroke="#ccc" strokeWidth="3.5">
              <rect x="2" y="4" width="46" height="48" />
              <path d="M13 26h24" />
            </svg>
            <ActionLabel>删自选</ActionLabel>
          </Action>
          <Action>
            <svg width="52" height="56" viewBox="0 0 52 56" fill="none" stroke="#ccc" strokeWidth="3">
              <ellipse cx="26" cy="28" rx="24" ry="25" />
              <path d="M15 22h22M15 34h22" />
            </svg>
            <ActionLabel>功能</ActionLabel>
          </Action>
        </Actions>
        <SystemKeys>
          <svg width="44" height="43" viewBox="0 0 44 43" fill="#bbb">
            <rect y="6" width="44" height="7" rx="3" />
            <rect y="19" width="44" height="7" rx="3" />
            <rect y="33" width="44" height="7" rx="3" />
          </svg>
          <svg width="58" height="43" viewBox="0 0 58 43" fill="none" stroke="#bbb" strokeWidth="5">
            <path d="M2 24L29 2l27 22" />
            <path d="M11 20v17a4 4 0 0 0 4 4h28a4 4 0 0 0 4-4V20" />
          </svg>
          <svg width="48" height="43" viewBox="0 0 48 43" fill="none" stroke="#bbb" strokeWidth="6">
            <path d="M12 9h31a3 3 0 0 1 3 3v26a2 2 0 0 1-2 2H12" />
            <path d="M13 1L2 9l10 6" fill="#bbb" stroke="none" />
          </svg>
        </SystemKeys>
        <Credit>
          <CreditBold>头条</CreditBold> @财富
        </Credit>
      </BottomBar>
    </Screen>
  )
}

export default App
